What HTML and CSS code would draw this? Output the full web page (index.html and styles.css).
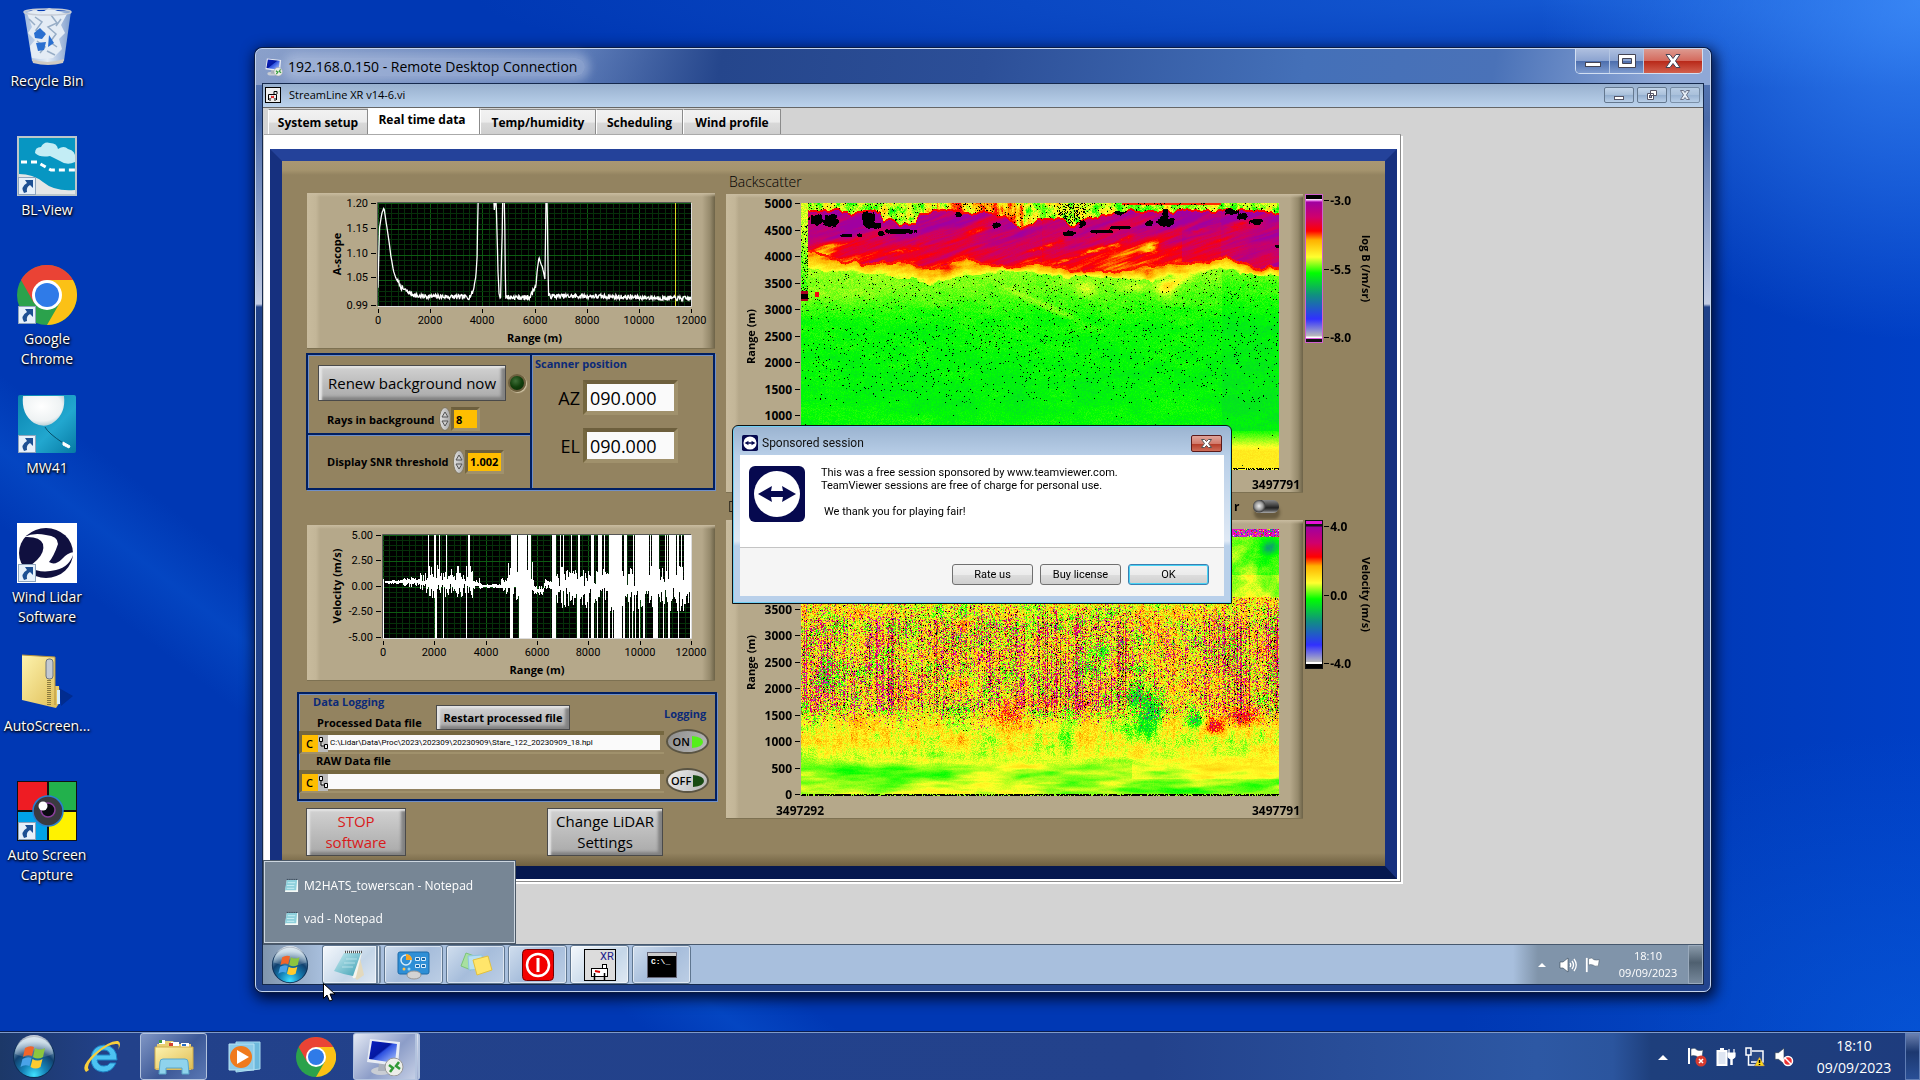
FILE: index.html
```html
<!DOCTYPE html>
<html lang="en">
<head>
    <meta charset="UTF-8">
    <meta name="viewport" content="width=device-width, initial-scale=1.0">
    <title>Remote Desktop - StreamLine XR</title>
    <link rel="stylesheet" href="styles.css">
</head>
<body>
    <!-- shared icons -->
    <svg class="defs" width="0" height="0" aria-hidden="true">
        <defs>
            <radialGradient id="orbFill" cx="50%" cy="95%" r="85%">
                <stop offset="0" stop-color="#3fe0ff"/><stop offset=".35" stop-color="#1583b8"/><stop offset=".7" stop-color="#11406e"/><stop offset="1" stop-color="#8fb3cc"/>
            </radialGradient>
            <linearGradient id="shine" x1="0" y1="0" x2="0" y2="1">
                <stop offset="0" stop-color="#fff" stop-opacity=".75"/><stop offset="1" stop-color="#fff" stop-opacity=".1"/>
            </linearGradient>
            <linearGradient id="screenFill" x1="0" y1="0" x2="1" y2="1">
                <stop offset="0" stop-color="#0a1fc0"/><stop offset=".45" stop-color="#0418a0"/><stop offset=".5" stop-color="#2c50e0"/><stop offset="1" stop-color="#b8d0ff"/>
            </linearGradient>
            <linearGradient id="folderFill" x1="0" y1="0" x2="1" y2="1">
                <stop offset="0" stop-color="#fdf3ae"/><stop offset="1" stop-color="#dfbd55"/>
            </linearGradient>
            <linearGradient id="padFill" x1="0" y1="0" x2="1" y2="1">
                <stop offset="0" stop-color="#c9ecf2"/><stop offset="1" stop-color="#3b9fb3"/>
            </linearGradient>
            <linearGradient id="tealFill" x1="0" y1="0" x2="1" y2="1">
                <stop offset="0" stop-color="#0a84b0"/><stop offset=".6" stop-color="#22a7cf"/><stop offset="1" stop-color="#067aa3"/>
            </linearGradient>
            <radialGradient id="balloonFill" cx="45%" cy="35%" r="70%">
                <stop offset="0" stop-color="#fff"/><stop offset=".7" stop-color="#eef2f3"/><stop offset="1" stop-color="#a9c6cf"/>
            </radialGradient>
            <linearGradient id="binFill" x1="0" y1="0" x2="1" y2="0">
                <stop offset="0" stop-color="#9fb9dd"/><stop offset=".5" stop-color="#e3ecf6"/><stop offset="1" stop-color="#7d9ccc"/>
            </linearGradient>
        </defs>
        <symbol id="orb" viewBox="0 0 44 44">
            <circle cx="22" cy="22" r="21" fill="#0c2f55"/>
            <circle cx="22" cy="22" r="20" fill="url(#orbFill)"/>
            <path d="M3 19a19 19 0 0 1 38 0q-18 8-38 0z" fill="url(#shine)"/>
            <path d="M13 13q5-3 9-1l-2 9q-5-2-9 1z" fill="#f0652a"/>
            <path d="M23 13q5 3 10 0l-2 9q-5 3-10 0z" fill="#8cc63f"/>
            <path d="M10.500 24q5-3 9-1l-2 8q-5-2-9 1z" fill="#4aa3e8"/>
            <path d="M20.500 24q5 3 10 0l-2 8q-5 3-10 0z" fill="#ffcb2e"/>
        </symbol>
        <symbol id="chrome" viewBox="0 0 60 60">
            <circle cx="30" cy="30" r="30" fill="#2ba24c"/>
            <path d="M4 15A30 30 0 0 1 56 15L30 15L17 38z" fill="#ea4335"/>
            <path d="M30 15H56a30 30 0 0 1-26 45l13-22.500z" fill="#fbc116"/>
            <circle cx="30" cy="30" r="15" fill="#fff"/>
            <circle cx="30" cy="30" r="12" fill="#2f7be8"/>
        </symbol>
        <symbol id="shortcut" viewBox="0 0 18 18">
            <rect x=".5" y=".5" width="17" height="17" fill="#e6f0fa" stroke="#8fa5bd"/>
            <path d="M7 3h8v8l-3-3q-4 2-3 7l-3 1Q2 10 9 6z" fill="#1d4f92"/>
        </symbol>
        <symbol id="notepad" viewBox="0 0 36 32">
            <path d="M27 5l5 21-7 5-3-3z" fill="#e3d9bd"/>
            <path d="M12 3h18l-6 25q-1 2-3 1z" fill="#f5f5ef"/>
            <path d="M12 4h17l-8 23Q10 25 2 22z" fill="url(#padFill)"/>
            <path d="M14 10h11M12 14h11M10 18h11" stroke="#d8f2f6" stroke-opacity=".6"/>
            <path d="M13 3h17" stroke="#555" stroke-width="2.500" stroke-dasharray="1 1"/>
        </symbol>
        <symbol id="notepad-small" viewBox="0 0 16 16">
            <path d="M3 2h12v13H1z" fill="#f4f9f6"/>
            <path d="M3 2h11l-1 11H1z" fill="#8ed0dc"/>
            <path d="M4 5h8M3 8h8M3 11h8" stroke="#c9eef3"/>
            <path d="M3 1.500h12" stroke="#234" stroke-dasharray="1 1"/>
        </symbol>
        <symbol id="rdp" viewBox="0 0 38 38">
            <ellipse cx="15" cy="33" rx="10" ry="4" fill="#c9cdd4"/>
            <path d="M13 25h7v8h-8z" fill="#aab0bb"/>
            <path d="M4 1l30 3-2 24L1 24z" fill="#e8ecf4"/>
            <path d="M6 3l25 3-2 19L3 21z" fill="url(#screenFill)"/>
            <circle cx="28" cy="29" r="9" fill="#eceee9" stroke="#999"/>
            <path d="M23 27l4 3-3 4M33 24l-3 4 4 3" fill="none" stroke="#2f9a35" stroke-width="2.500"/>
        </symbol>
        <symbol id="teamviewer" viewBox="0 0 56 56">
            <rect width="56" height="56" rx="6" fill="#06094f"/>
            <circle cx="28" cy="28" r="23" fill="#fff"/>
            <path d="M9 28l14-8-1 5h12l-1-5 14 8-14 8 1-5H22l1 5z" fill="#06094f"/>
        </symbol>
        <symbol id="vi" viewBox="0 0 16 16">
            <rect x=".5" y=".5" width="15" height="15" fill="#eee" stroke="#000"/>
            <path d="M3.500 13V7.500h8V13M5 11v3M10 11v3M9 7V4.500h3V7" fill="none" stroke="#000"/>
            <path d="M6 9l3 2M9 9l-3 2" stroke="#d00"/>
        </symbol>
        <symbol id="speaker" viewBox="0 0 18 16">
            <path d="M1 5h3l5-4v14l-5-4H1z" fill="#fff" stroke="#345" stroke-width=".6"/>
        </symbol>
        <symbol id="waves" viewBox="0 0 18 16">
            <path d="M11 6q1.500 2 0 4M13 4q3 4 0 8M15 2q4.500 6 0 12" fill="none" stroke="#fff" stroke-width="1.300"/>
        </symbol>
        <symbol id="flag" viewBox="0 0 18 18">
            <path d="M2 1v16" stroke="#fff" stroke-width="2"/>
            <path d="M4 2q4-2 6 1 3 1 6 0l-1 7q-4 1-6-1-3-1-5 0z" fill="#fff" stroke="#345" stroke-width=".5"/>
        </symbol>
    </svg>

    <div class="desktop">
        <nav class="desktop-icons" aria-label="Desktop">
            <a href="#recycle" class="desktop-icon">
                <span class="pic"><svg width="60" height="60" viewBox="0 0 60 60">
                    <path d="M7 4h47l-7 50q-17 6-32 0z" fill="url(#binFill)"/>
                    <path d="M10 6l8-4 6 4 8-5 9 3 9 3-6 11 4 8-6 6 3 10-9 9-13 1-8-1-2-12 5-6-7-7 4-6z" fill="#e4ecf5"/>
                    <path d="M18 10l7 5-6 8 9 3M34 8l6 8-9 4 8 7-6 8 7 5M20 34l8 6-5 6M12 12l6 6M44 12l-5 7M30 44l8 4" fill="none" stroke="#97adc6" stroke-width="1.500"/>
                    <path d="M17 26l6-5 6 6-4 5-7-1zM19 36l10-1-2 8-6 1zM32 28l5 8-6 4z" fill="#2a6fd0"/>
                    <ellipse cx="30.500" cy="5" rx="23.500" ry="3" fill="none" stroke="#c6ccd6" stroke-width="1.500"/>
                    <path d="M15 52q15 6 32 0l-1 4q-15 4-30 0z" fill="#cfcac2"/>
                </svg></span>
                <span class="caption">Recycle Bin</span>
            </a>
            <a href="#bl-view" class="desktop-icon">
                <span class="pic"><svg width="60" height="60" viewBox="0 0 60 60">
                    <rect width="60" height="60" fill="#bcc7cb"/><rect x="2" y="2" width="56" height="56" fill="#0796c2"/>
                    <path d="M18 17q0-6 6-6 3-6 9-4 7 0 8 6 6-4 10 0 8 2 7 9v4q-8 4-15-1-6-3-10-5-10 2-15-3z" fill="#c3edf5"/>
                    <path d="M4 26l16 0 14 8h24" fill="none" stroke="#fff" stroke-width="3" stroke-dasharray="6 4"/>
                    <path d="M2 38q14 0 24 8 12 10 32 8v4H2z" fill="#e4e6e6"/>
                </svg><svg class="link-mark" width="18" height="18"><use href="#shortcut"/></svg></span>
                <span class="caption">BL-View</span>
            </a>
            <a href="#chrome-app" class="desktop-icon">
                <span class="pic"><svg width="60" height="60"><use href="#chrome"/></svg><svg class="link-mark" width="18" height="18"><use href="#shortcut"/></svg></span>
                <span class="caption">Google<br>Chrome</span>
            </a>
            <a href="#mw41" class="desktop-icon">
                <span class="pic"><svg width="60" height="60" viewBox="0 0 60 60">
                    <rect x="1" y="1" width="58" height="58" rx="2" fill="url(#tealFill)"/>
                    <path d="M6 2h41q2 17-10 26-9 7-20 1Q4 20 6 2z" fill="url(#balloonFill)"/>
                    <path d="M28 33q3 6 18 16" fill="none" stroke="#06506b"/>
                    <path d="M46 48l7 4-1 2-6-3z" fill="#fff" stroke="#fff"/>
                </svg><svg class="link-mark" width="18" height="18"><use href="#shortcut"/></svg></span>
                <span class="caption">MW41</span>
            </a>
            <a href="#wind-lidar" class="desktop-icon">
                <span class="pic"><svg width="60" height="60" viewBox="0 0 60 60">
                    <rect width="60" height="60" fill="#fff"/>
                    <ellipse cx="29" cy="30" rx="27" ry="25" fill="#10103f"/>
                    <path d="M7 14q10-5 22-2 12 1 12 9-4 12-9 18 6 4 13-3 5-6 12-7-4 15-18 18-16 4-27-3l8-7q8-8 6-16-3-8-19-7z" fill="#fff"/>
                </svg><svg class="link-mark" width="18" height="18"><use href="#shortcut"/></svg></span>
                <span class="caption">Wind Lidar<br>Software</span>
            </a>
            <a href="#autoscreen-zip" class="desktop-icon">
                <span class="pic"><svg width="60" height="60" viewBox="0 0 60 60">
                    <path d="M42 36l14 8-12 10z" fill="#02206b" opacity=".5"/>
                    <path d="M5 3l33 2v29h4l1 16-4 6L5 48z" fill="url(#folderFill)"/>
                    <path d="M5 3l33 2v48" fill="none" stroke="#b6923c"/>
                    <path d="M32 8v46" stroke="#8a7a3f" stroke-width="4" stroke-dasharray="1 1"/>
                    <rect x="29" y="7" width="7" height="20" rx="3" fill="#c3c9d1" stroke="#6b737f"/>
                    <rect x="40" y="38" width="3" height="14" fill="#d8eef8"/>
                </svg></span>
                <span class="caption">AutoScreen...</span>
            </a>
            <a href="#auto-capture" class="desktop-icon">
                <span class="pic"><svg width="60" height="60" viewBox="0 0 60 60">
                    <rect width="60" height="60" fill="#111"/>
                    <rect x="1" y="1" width="29" height="28" fill="#ee1c23"/><rect x="32" y="1" width="27" height="28" fill="#22b14c"/>
                    <rect x="1" y="31" width="29" height="28" fill="#00a2e8"/><rect x="32" y="31" width="27" height="28" fill="#fff200"/>
                    <circle cx="31" cy="30" r="15" fill="#3a3a40" stroke="#2a7fd0" stroke-width="1.500"/>
                    <circle cx="31" cy="29" r="7" fill="#0a0a12" stroke="#8b3f9c" stroke-width="1.500"/>
                    <circle cx="26" cy="25" r="4.500" fill="#fff"/>
                </svg><svg class="link-mark" width="18" height="18"><use href="#shortcut"/></svg></span>
                <span class="caption">Auto Screen<br>Capture</span>
            </a>
        </nav>

        <section class="rdp-window">
            <header class="rdp-title">
                <svg width="18" height="20"><use href="#rdp"/></svg>
                <h1>192.168.0.150 - Remote Desktop Connection</h1>
                <div class="caption-buttons">
                    <button type="button" aria-label="Minimize"><svg width="18" height="16"><rect x="1.500" y="9.500" width="15" height="4" fill="#fff" stroke="#445"/></svg></button>
                    <button type="button" aria-label="Maximize"><svg width="18" height="16"><path d="M.5 1.500h17v13H.5zM4.500 5.500v5h9v-5z" fill="#fff" fill-rule="evenodd" stroke="#445"/></svg></button>
                    <button type="button" class="close" aria-label="Close"><svg width="18" height="16"><path d="M2 1.500h4l3 4 3-4h4l-4.500 6.500 4.500 6.500h-4l-3-4-3 4H2l4.500-6.500z" fill="#fff" stroke="#445"/></svg></button>
                </div>
            </header>

            <div class="remote">
                <div class="vi-title">
                    <svg width="16" height="16"><use href="#vi"/></svg>
                    <span>StreamLine XR v14-6.vi</span>
                    <div class="mdi-buttons">
                        <button type="button" aria-label="Minimize VI"><svg width="14" height="12"><rect x="2.500" y="7.500" width="9" height="3" fill="#fff" stroke="#556"/></svg></button>
                        <button type="button" aria-label="Restore VI"><svg width="14" height="12"><path d="M5.500 1.500h6v5h-6zM2.500 4.500h6v6h-6z" fill="#fff" stroke="#556"/><rect x="4.500" y="6.500" width="2" height="2" fill="#aac" stroke="#556"/></svg></button>
                        <button type="button" class="dim" aria-label="Close VI"><svg width="14" height="12"><path d="M2.500 1.500h3l1.500 2 1.500-2h3l-3 4.500 3 4.500h-3l-1.500-2-1.500 2h-3l3-4.500z" fill="#fff" stroke="#556"/></svg></button>
                    </div>
                </div>

                <main class="vi-body">
                    <div class="tabs" role="tablist">
                        <button type="button" role="tab">System setup</button>
                        <button type="button" role="tab" class="active" aria-selected="true">Real time data</button>
                        <button type="button" role="tab">Temp/humidity</button>
                        <button type="button" role="tab">Scheduling</button>
                        <button type="button" role="tab">Wind profile</button>
                    </div>
                    <div class="tab-page">
                        <div class="front-panel">
                            <div class="left-column">
                                <svg class="graph" id="ascope" width="408" height="156"></svg>

                                <div class="settings">
                                    <div class="background-box">
                                        <div class="row renew">
                                            <button type="button" class="lv-button">Renew background now</button>
                                            <span class="led"></span>
                                        </div>
                                        <div class="row rays">
                                            <label for="rays">Rays in background</label>
                                            <span class="spinner"><svg width="8" height="16"><path d="M4 1l3 5H1zM4 15l3-5H1z"/></svg></span>
                                            <input id="rays" class="amber narrow" type="text" value="8">
                                        </div>
                                    </div>
                                    <div class="snr-box">
                                        <div class="row">
                                            <label for="snr">Display SNR threshold</label>
                                            <span class="spinner"><svg width="8" height="16"><path d="M4 1l3 5H1zM4 15l3-5H1z"/></svg></span>
                                            <input id="snr" class="amber" type="text" value="1.002">
                                        </div>
                                    </div>
                                    <div class="scanner-box">
                                        <h2>Scanner position</h2>
                                        <div class="axis"><label for="az">AZ</label><input id="az" type="text" value="090.000"></div>
                                        <div class="axis"><label for="el">EL</label><input id="el" type="text" value="090.000"></div>
                                    </div>
                                </div>

                                <svg class="graph" id="velocity" width="408" height="156"></svg>

                                <div class="logging">
                                    <div class="logging-files">
                                        <h2>Data Logging</h2>
                                        <div class="logging-head">
                                            <label for="processed">Processed Data file</label>
                                            <button type="button" class="lv-button bold">Restart processed file</button>
                                        </div>
                                        <div class="path">
                                            <span class="drive">C</span><svg width="10" height="17"><path d="M1.500 2.500h3v4h-3zM6.500 9.500h3v4h-3zM3 7v4h3" fill="#eee" stroke="#000"/></svg>
                                            <input id="processed" type="text" value="C:\Lidar\Data\Proc\2023\202309\20230909\Stare_122_20230909_18.hpl">
                                        </div>
                                        <label class="raw-label" for="raw">RAW Data file</label>
                                        <div class="path">
                                            <span class="drive">C</span><svg width="10" height="17"><path d="M1.500 2.500h3v4h-3zM6.500 9.500h3v4h-3zM3 7v4h3" fill="#eee" stroke="#000"/></svg>
                                            <input id="raw" type="text" value="">
                                        </div>
                                    </div>
                                    <div class="logging-switches">
                                        <h2>Logging</h2>
                                        <button type="button" class="oval on">ON<svg width="12" height="14"><path d="M1 1q11 1 11 6t-11 6z" fill="#55ee1c"/></svg></button>
                                        <button type="button" class="oval">OFF<svg width="12" height="14"><path d="M1 1q11 1 11 6t-11 6z" fill="#174a12"/></svg></button>
                                    </div>
                                </div>

                                <div class="bottom-buttons">
                                    <button type="button" class="lv-button stop">STOP<br>software</button>
                                    <button type="button" class="lv-button">Change LiDAR<br>Settings</button>
                                </div>
                            </div>

                            <div class="right-column">
                                <h2 class="plot-name">Backscatter</h2>
                                <div class="map-row">
                                    <div class="map-panel">
                                        <span class="y-title">Range (m)</span>
                                        <ol class="y-axis"></ol>
                                        <canvas id="backscatter-map" width="478" height="267"></canvas>
                                        <div class="x-axis"><span>3497292</span><span>3497791</span></div>
                                    </div>
                                    <div class="color-bar top-bar"></div>
                                    <ol class="color-scale"><li>-3.0</li><li>-5.5</li><li>-8.0</li></ol>
                                    <span class="scale-title">log B (/m/sr)</span>
                                </div>
                                <div class="between">
                                    <span class="light">D</span>
                                    <label for="mode">r</label>
                                    <input id="mode" type="checkbox" class="lever">
                                </div>
                                <div class="map-row">
                                    <div class="map-panel">
                                        <span class="y-title">Range (m)</span>
                                        <ol class="y-axis"></ol>
                                        <canvas id="velocity-map" width="478" height="267"></canvas>
                                        <div class="x-axis"><span>3497292</span><span>3497791</span></div>
                                    </div>
                                    <div class="color-bar low-bar"></div>
                                    <ol class="color-scale"><li>4.0</li><li>0.0</li><li>-4.0</li></ol>
                                    <span class="scale-title">Velocity (m/s)</span>
                                </div>
                            </div>
                        </div>
                    </div>
                </main>

                <footer class="remote-taskbar">
                    <button type="button" class="start" aria-label="Start"><svg width="38" height="38"><use href="#orb"/></svg></button>
                    <button type="button" class="task stacked lit" aria-label="Notepad"><svg width="36" height="32"><use href="#notepad"/></svg></button>
                    <button type="button" class="task" aria-label="Control Panel"><svg width="34" height="30" viewBox="0 0 34 30">
                        <rect x="1" y="2" width="31" height="22" rx="2" fill="#2f8fd6" stroke="#1c6aa8"/>
                        <circle cx="9" cy="10" r="5" fill="none" stroke="#d8ecfa" stroke-width="1.500"/><path d="M9 10V4a6 6 0 0 1 6 6z" fill="#f6a623"/>
                        <path d="M18.500 7.500h4v3h-4zM24.500 7.500h4v3h-4zM18.500 14.500h4v3h-4zM24.500 14.500h4v3h-4z" fill="#1565a8" stroke="#d8ecfa"/>
                        <circle cx="7" cy="19" r="1.500" fill="#ffc04d"/><circle cx="12" cy="19" r="1.500" fill="#8fd6ff"/>
                        <ellipse cx="17" cy="25" rx="7" ry="4" fill="#d3d3d3" stroke="#999"/>
                    </svg></button>
                    <button type="button" class="task" aria-label="Sticky Notes"><svg width="34" height="28" viewBox="0 0 34 28">
                        <path d="M7 2l11 4-6 13-10-4z" fill="#a8e0a0" stroke="#7cc47a"/><path d="M9 5l14-1 1 14-14 1z" fill="#b7dff2" stroke="#8fc4e0"/><path d="M14 9l15-4 4 14-15 5z" fill="#ffe56b" stroke="#e0c040"/>
                    </svg></button>
                    <button type="button" class="task" aria-label="Shutdown"><svg width="32" height="32" viewBox="0 0 32 32">
                        <rect x=".5" y=".5" width="31" height="31" rx="4" fill="#f20000" stroke="#700"/><circle cx="16" cy="16" r="11" fill="none" stroke="#fff" stroke-width="2.500"/><rect x="14.500" y="9" width="3" height="14" fill="#fff"/>
                    </svg></button>
                    <button type="button" class="task lit" aria-label="StreamLine XR"><svg width="32" height="32" viewBox="0 0 32 32">
                        <rect x=".5" y=".5" width="31" height="31" fill="#dcdcdc" stroke="#000"/>
                        <text x="16" y="11" font-size="11" class="icon-text">XR</text>
                        <rect x="7.500" y="19.500" width="16" height="8" fill="#fff" stroke="#000"/><rect x="18.500" y="15.500" width="4" height="4" fill="#fff" stroke="#000"/>
                        <path d="M10.500 24v7M20.500 24v7" stroke="#000" stroke-width="1.500"/><path d="M11 22l5 1" stroke="#d00" stroke-width="2" fill="none"/>
                    </svg></button>
                    <button type="button" class="task" aria-label="Command Prompt"><svg width="30" height="26" viewBox="0 0 30 26">
                        <rect x=".5" y=".5" width="29" height="25" fill="#000" stroke="#667"/><rect x="1" y="1" width="28" height="3" fill="#ccc"/>
                        <text x="4" y="12" font-size="8" class="cmd-text">C:\_</text>
                    </svg></button>
                    <div class="tray">
                        <svg width="10" height="6"><path d="M1 5l4-4 4 4z" fill="#fff"/></svg>
                        <svg width="18" height="16"><use href="#speaker"/><use href="#waves"/></svg>
                        <svg width="16" height="16"><use href="#flag"/></svg>
                    </div>
                    <div class="clock"><time>18:10</time><time>09/09/2023</time></div>
                    <button type="button" class="show-desktop" aria-label="Show desktop"></button>

                    <ul class="window-list">
                        <li><a href="#towerscan"><svg width="15" height="15"><use href="#notepad-small"/></svg>M2HATS_towerscan - Notepad</a></li>
                        <li><a href="#vad"><svg width="15" height="15"><use href="#notepad-small"/></svg>vad - Notepad</a></li>
                    </ul>
                </footer>

                <div class="dialog" role="dialog" aria-labelledby="dialog-title">
                    <div class="dialog-title">
                        <svg width="16" height="16"><use href="#teamviewer"/></svg>
                        <h2 id="dialog-title">Sponsored session</h2>
                        <button type="button" aria-label="Close dialog"><svg width="11" height="9"><path d="M.5.500h3l2 2 2-2h3l-3 4 3 4h-3l-2-2-2 2h-3l3-4z" fill="#fff" stroke="#555"/></svg></button>
                    </div>
                    <div class="dialog-body">
                        <svg width="56" height="56"><use href="#teamviewer"/></svg>
                        <div class="message">
                            <p>This was a free session sponsored by www.teamviewer.com.<br>TeamViewer sessions are free of charge for personal use.</p>
                            <p class="thanks">We thank you for playing fair!</p>
                        </div>
                    </div>
                    <div class="dialog-buttons">
                        <button type="button">Rate us</button>
                        <button type="button">Buy license</button>
                        <button type="button" class="default">OK</button>
                    </div>
                </div>
            </div>
        </section>

        <svg class="cursor" width="13" height="20" viewBox="0 0 13 20"><path d="M.5.500v15l3.500-3.500 2.500 6 3-1-2.500-6h5z" fill="#fff" stroke="#000"/></svg>
    </div>

    <footer class="taskbar">
        <button type="button" class="start" aria-label="Start menu"><svg width="44" height="44"><use href="#orb"/></svg></button>
        <button type="button" class="pin" aria-label="Internet Explorer"><svg width="40" height="36" viewBox="0 0 40 36">
            <path d="M34 21H14q1 6 7 6 4 0 6-3h6q-4 9-13 9Q8 32 8 19 9 7 21 6q13 1 13 15zM14 16h13q-1-5-6-5t-7 5z" fill="#4cc3f2" stroke="#1d82c4"/>
            <path d="M3 33q-6-6 9-19Q27 1 35 2q4 2 0 9 2-6-1-6-8-1-20 10Q2 26 6 31z" fill="#f8ce3c"/>
        </svg></button>
        <button type="button" class="pin open" aria-label="Explorer"><svg width="42" height="38" viewBox="0 0 42 38">
            <path d="M4 6h6l2-3h8l2 3h16v26H3z" fill="#e9cf72"/>
            <path d="M6 2h6v4H6zM18 4h8v4h-8zM28 5h8v4h-8z" fill="#fff"/><path d="M6 2h3v3H6z" fill="#3c9a42"/><path d="M16 5h4v3h-4z" fill="#d3402e"/><path d="M29 6h4v2h-4z" fill="#2c6fc4"/>
            <path d="M2 9h38v22H2z" fill="url(#folderFill)" stroke="#d2ad4a"/>
            <path d="M6 36l1-12q0-3 3-3h22q3 0 3 3l1 12h-7v-6H13v6z" fill="#8fd3ec" stroke="#5ba7c9"/>
        </svg></button>
        <button type="button" class="pin" aria-label="Media Player"><svg width="34" height="32" viewBox="0 0 34 32">
            <path d="M8 1h24v27l-24 3z" fill="#6db9dc" stroke="#a9dcf0"/><path d="M1 3h25v26H1z" fill="#8ccbe8" stroke="#b9e3f4"/>
            <circle cx="13" cy="16" r="11" fill="#f07a1c"/><path d="M9 9l12 7-12 7z" fill="#fff"/>
        </svg></button>
        <button type="button" class="pin" aria-label="Chrome"><svg width="40" height="40"><use href="#chrome"/></svg></button>
        <button type="button" class="pin open bright stacked" aria-label="Remote Desktop"><svg width="38" height="38"><use href="#rdp"/></svg></button>
        <div class="tray">
            <svg width="10" height="6"><path d="M0 6l5-5 5 5z" fill="#fff"/></svg>
            <svg width="20" height="20" viewBox="0 0 20 20"><use href="#flag" width="18" height="18"/><circle cx="14" cy="14" r="5.500" fill="#d63a2f"/><path d="M12 12l4 4M16 12l-4 4" stroke="#fff" stroke-width="1.500"/></svg>
            <svg width="20" height="20" viewBox="0 0 20 20"><path d="M1.500 4h9v14h-9z" fill="#dfe6f2" stroke="#fff" stroke-width="2"/><path d="M4 2h4" stroke="#fff" stroke-width="2"/><path d="M13 2v4M18 2v4M12 6h7v3q0 2-3.500 3Q12 11 12 9z" fill="#fff" stroke="#fff" stroke-width="1.200"/><path d="M15.500 11v7" stroke="#fff" stroke-width="2.500"/></svg>
            <svg width="20" height="20" viewBox="0 0 20 20"><path d="M7 4h11v11H6" fill="#2a4a85" stroke="#fff" stroke-width="1.500"/><path d="M1 1h5v7H1zM3.500 8v10h8" fill="none" stroke="#fff" stroke-width="1.500"/><path d="M14.500 10l5 9h-10z" fill="#ffd91a" stroke="#866" stroke-width=".5"/><path d="M14.500 13v3M14.500 17v1" stroke="#000" stroke-width="1.500"/></svg>
            <svg width="20" height="20" viewBox="0 0 20 20"><use href="#speaker" width="20" height="18"/><circle cx="14" cy="14" r="4.500" fill="#e33" stroke="#fff" stroke-width="1.500"/><path d="M11 11l6 6" stroke="#fff" stroke-width="1.500"/></svg>
        </div>
        <div class="clock"><time>18:10</time><time>09/09/2023</time></div>
        <button type="button" class="show-desktop" aria-label="Show host desktop"></button>
    </footer>

    <script src="charts.js"></script>
</body>
</html>
```
FILE: styles.css
```css
* { box-sizing: border-box; }
body {
    margin: 0;
    height: 100vh;
    display: flex;
    flex-direction: column;
    overflow: hidden;
    font-family: "Open Sans", "Noto Sans", sans-serif;
    font-size: 12px;
    color: #000;
}
button, input { font: inherit; color: inherit; margin: 0; padding: 0; border: 0; border-radius: 0; }
h1, h2, p, ol, ul { margin: 0; padding: 0; list-style: none; font: inherit; }
a { color: inherit; text-decoration: none; }
svg { display: block; flex: none; }
.defs { position: absolute; }

/* desktop */
.desktop {
    flex: 1;
    position: relative;
    background:
        radial-gradient(ellipse 380px 340px at 100% 0, rgba(70, 150, 255, .75), transparent),
        radial-gradient(ellipse 1100px 90px at 82% 0, rgba(40, 120, 240, .5), transparent),
        linear-gradient(218deg, transparent 74%, rgba(10, 90, 215, .4) 77%, transparent 80%),
        radial-gradient(ellipse 460px 300px at 100% 100%, rgba(10, 100, 225, .5), transparent),
        linear-gradient(90deg, transparent 85%, rgba(0, 70, 215, .5)),
        #0038b4;
}
.desktop-icons { width: 94px; padding-top: 7px; display: flex; flex-direction: column; }
.desktop-icon { height: 129px; display: flex; flex-direction: column; align-items: center; color: #fff; }
.pic { position: relative; width: 60px; height: 60px; margin-bottom: 4px; }
.link-mark { position: absolute; left: 1px; bottom: 1px; }
.caption {
    font-size: 14px;
    line-height: 20px;
    text-align: center;
    white-space: nowrap;
    text-shadow: 0 1px 2px #000, 1px 1px 3px #000;
}

/* remote desktop window */
.rdp-window {
    position: absolute;
    left: 255px;
    right: 209px;
    top: 48px;
    bottom: 40px;
    padding: 0 7px 7px;
    display: flex;
    flex-direction: column;
    border: 1px solid #c4d4ee;
    border-radius: 7px;
    background:
        linear-gradient(100deg, rgba(170, 185, 215, .6) 0, rgba(100, 130, 190, .4) 22%, #25468c 32%, #2c4f98 50%, #4470b8 72%, #4a72b8 85%, #8fa8d6 97%) 0 0 / 100% 36px no-repeat,
        linear-gradient(#5c7cb8, #4a6aa8 70px, #c2cce4 255px, #1f4189 258px, #22448e);
    box-shadow: 0 0 0 1px #0a1c44, 2px 4px 14px 3px rgba(0, 0, 20, .8);
}
.rdp-title { height: 35px; display: flex; align-items: center; gap: 5px; padding-left: 2px; }
.rdp-title h1 {
    font-size: 14px;
    padding: 0 8px 0 0;
    border-radius: 12px;
    background: rgba(190, 203, 230, .45);
    box-shadow: 0 0 8px 5px rgba(190, 203, 230, .45);
    line-height: 18px;
}
.caption-buttons {
    display: flex;
    align-self: flex-start;
    margin-left: auto;
    border: 1px solid #d2dff2;
    border-top: 0;
    border-radius: 0 0 5px 5px;
    overflow: hidden;
}
.caption-buttons button {
    width: 34px;
    height: 24px;
    display: flex;
    align-items: center;
    justify-content: center;
    border-right: 1px solid #b5c6e2;
    background: linear-gradient(#aebfdf, #8ba3d0 50%, #4e6fae 52%, #7d9ace);
}
.caption-buttons .close { width: 58px; border: 0; background: linear-gradient(#dd9a90, #d4695c 50%, #b92a1a 52%, #d2604e); }

.remote {
    flex: 1;
    position: relative;
    display: flex;
    flex-direction: column;
    min-height: 0;
    background: #d3d3d3;
    outline: 1px solid #15294d;
}
.vi-title {
    height: 23px;
    display: flex;
    align-items: center;
    gap: 8px;
    padding: 0 3px 2px 2px;
    font-size: 11px;
    background: linear-gradient(#98b0ce, #bbd2ec);
}
.mdi-buttons { display: flex; gap: 3px; margin-left: auto; }
.mdi-buttons button {
    width: 30px;
    height: 16px;
    display: flex;
    align-items: center;
    justify-content: center;
    border: 1px solid #64788f;
    border-radius: 2px;
    background: linear-gradient(#c3d5ea, #a9c0da 50%, #93aece 52%, #b9cfe8);
}
.mdi-buttons .dim { opacity: .7; }

.vi-body { flex: 1; min-height: 0; overflow: hidden; padding: 0 1px; border-top: 1px solid #666; }
.tabs { display: flex; align-items: flex-end; height: 26px; padding-left: 4px; }
.tabs button {
    height: 25px;
    padding: 0 8px;
    border: 1px solid #8b8b8b;
    border-left-color: #fff;
    border-bottom: 0;
    background: linear-gradient(#f2f2f2, #ececec 50%, #d8d8d8 55%, #cfcfcf);
    font-weight: 700;
    font-size: 12px;
    flex: none;
    width: 100px;
}
.tabs button:nth-child(3) { width: 116px; }
.tabs button:nth-child(4) { width: 87px; }
.tabs button:nth-child(5) { width: 98px; }
.tabs .active { width: 112px; height: 26px; padding: 0 12px 4px 8px; border-color: #fff #8b8b8b #fff #fff; background: #fff; }

.tab-page {
    width: fit-content;
    padding: 14px 3px 2px 6px;
    background: #fff;
    border: 1px solid #8b8b8b;
    border-top-color: #aaa;
    border-left: 0;
    box-shadow: 2px 2px 0 #fff;
}
.front-panel {
    display: grid;
    grid-template-columns: 408px 647px;
    column-gap: 11px;
    padding: 32px 12px 10px 25px;
    border: solid;
    border-width: 12px 12px 13px;
    border-color: #24429a #16307f #05184f #16307f;
    background:
        linear-gradient(#a99773, #a5946e 9px, transparent 14px),
        linear-gradient(0deg, #6f6040, transparent 13px),
        #938360;
}
.left-column { display: flex; flex-direction: column; }

/* graphs */
.graph, .map-panel {
    background:
        linear-gradient(#c9bca0, transparent 4px),
        linear-gradient(90deg, #c8bb9d, #c3b698 9px, transparent 13px),
        linear-gradient(270deg, #6d6348, #968a6c 5px, transparent 13px),
        #b5a88a;
    border-bottom: 1px solid #7d7152;
}
.graph text { font-family: Roboto, sans-serif; font-size: 11px; }
.graph .title { font-family: "Open Sans", sans-serif; font-weight: 700; font-size: 11px; }

/* settings boxes */
.settings {
    display: grid;
    grid-template-columns: 226px 183px;
    grid-template-rows: 82px 55px;
    margin: 4px 0 35px -1px;
    font-weight: 700;
    font-size: 11px;
}
.background-box, .snr-box, .scanner-box {
    border: 2px solid #001f63;
    box-shadow: inset 1px 1px 0 #6f8fc8, 1px 1px 0 #6f8fc8;
}
.snr-box { border-top: 0; display: flex; align-items: center; }
.scanner-box { grid-column: 2; grid-row: 1 / 3; border-left: 0; padding: 1px 0 0 3px; }
h2 { color: #0b2a78; }
.scanner-box h2, .logging h2 { font-weight: 700; font-size: 11px; line-height: 16px; }
.row { display: flex; align-items: center; padding-left: 19px; }
.renew { padding: 10px 0 0 10px; gap: 2px; }
.rays { margin-top: 6px; }
.rays label, .snr-box label { width: 112px; white-space: nowrap; }
.snr-box label { width: 126px; }
.lv-button {
    border: 1px solid #4a4a4a;
    background: linear-gradient(#d2d2d2, #bdbdbd 50%, #a9a9a9);
    box-shadow: inset 3px 2px 2px #e4e4e4, inset -4px -3px 3px #828282;
    font-size: 15px;
    font-weight: 400;
    line-height: 21px;
}
.renew .lv-button { width: 188px; height: 36px; }
.led {
    width: 18px;
    height: 18px;
    border-radius: 50%;
    background: radial-gradient(circle at 40% 35%, #3f6f38, #123f0c 50%, #0a2606);
    border: 2px solid #6d603f;
    box-shadow: 1px 1px 1px #d0c3a4;
}
.spinner {
    display: flex;
    align-items: center;
    justify-content: center;
    width: 12px;
    height: 24px;
    border-radius: 50%;
    background: linear-gradient(90deg, #e0e0e0, #a8a8a8);
    border: 1px solid #857b62;
}
.spinner path { fill: #ccc; stroke: #555; }
.amber {
    width: 39px;
    height: 24px;
    padding-left: 2px;
    border: 3px solid;
    border-color: #6d5f3d #a0916c #a0916c #75673f;
    background: #ffbe00;
    font-weight: 700;
}
.amber.narrow { width: 29px; }
.scanner-box .axis { display: flex; align-items: center; justify-content: flex-end; gap: 3px; margin: 8px 35px 13px 0; font-size: 18px; font-weight: 400; }
.scanner-box input {
    width: 95px;
    height: 35px;
    padding-left: 3px;
    border: 4px solid;
    border-color: #6d5f3d #a0916c #a0916c #75673f;
    background: #fafafa;
}

/* data logging */
.logging {
    display: grid;
    grid-template-columns: 365px 1fr;
    height: 109px;
    margin: 11px -2px 7px -10px;
    border: 2px solid #001f63;
    box-shadow: inset 1px 1px 0 #6f8fc8, 1px 1px 0 #6f8fc8;
    font-weight: 700;
    font-size: 11px;
}
.logging-files h2 { height: 11px; padding-left: 14px; }
.logging-head { display: flex; justify-content: space-between; height: 26px; padding: 0 94px 1px 18px; }
.logging-head label { align-self: flex-end; }
.lv-button.bold { width: 134px; height: 25px; font-size: 11px; font-weight: 700; }
.path {
    display: flex;
    height: 23px;
    align-items: flex-start;
    border: solid;
    border-width: 4px 0 2px 3px;
    border-color: #75673f transparent #a0916c #75673f;
}
.drive { width: 16px; height: 17px; line-height: 17px; padding-left: 4px; background: #ffbe00; font-weight: 600; }
.path svg { background: #bbb; }
.path input { flex: 1; height: 15px; margin-right: 4px; padding-left: 2px; background: #fafafa; font-family: Roboto, sans-serif; font-size: 8px; font-weight: 400; }
.raw-label { display: block; height: 16px; line-height: 14px; padding-left: 17px; }
.logging-switches { display: flex; flex-direction: column; align-items: center; padding-right: 4px; }
.logging-switches h2 { margin: 12px 5px 7px 0; }
.oval {
    display: flex;
    align-items: center;
    justify-content: center;
    gap: 1px;
    width: 43px;
    height: 25px;
    border: 2px solid #5a5443;
    border-radius: 50%;
    background: linear-gradient(120deg, #eee, #b5b5b5);
    font-size: 11px;
    font-weight: 600;
    margin-bottom: 14px;
}
.oval.on { background: linear-gradient(120deg, #8d8d8d, #b9b9b9); }
.bottom-buttons { display: flex; justify-content: space-between; align-items: flex-start; margin: 0 52px 0 -1px; }
.bottom-buttons .lv-button { width: 116px; height: 48px; }
.bottom-buttons .stop { width: 100px; color: #d81b1b; }

/* heat maps */
.right-column { margin-top: -22px; }
.plot-name { height: 23px; padding-left: 3px; font-size: 14px; font-weight: 300; line-height: 22px; color: #000; }
.map-row { display: flex; align-items: flex-start; font-weight: 700; font-size: 12px; line-height: 14px; }
.map-panel {
    display: grid;
    grid-template-columns: 20px 37px 478px;
    grid-template-rows: 267px auto;
    width: 577px;
    height: 299px;
    padding: 9px 0 0 18px;
    flex: none;
}
.y-title, .scale-title { writing-mode: vertical-rl; font-size: 11px; text-align: center; white-space: nowrap; }
.y-title { transform: rotate(180deg); }
.y-axis { display: flex; flex-direction: column; justify-content: space-between; margin: -6px 0; text-align: right; white-space: nowrap; }
.y-axis li::after { content: ""; display: inline-block; width: 5px; height: 1px; margin: 0 1px 0 3px; vertical-align: 4px; background: #000; }
.x-axis { grid-column: 1 / 4; display: flex; justify-content: space-between; padding-top: 8px; margin: 0 -21px 0 32px; }
.color-bar { width: 20px; height: 149px; margin: 0 0 0 2px; border: 1px solid #d060d0; }
.top-bar { background: linear-gradient(#000 4px, #fff 4px, #e060e0 6px, #a000a0 7px, #d0006c 22px, #ff0000 36px, #ffb000 45px, #ffff30 62px, #00ff00 78px, #109080 100px, #3030ff 124px, #bbb 141px, #fff 142px, #fff 143px, #e060e0 143px, #e060e0 144px, #111 144px); }
.low-bar { border-color: #111; background: linear-gradient(#e612d9 3px, #111 3px, #111 5px, #a000a0 6px, #d0006c 22px, #ff0000 36px, #ffb000 45px, #ffff30 62px, #00ff00 78px, #109080 100px, #3030ff 124px, #bbb 141px, #fff 141px, #fff 143px, #000 143px); }
.color-scale { height: 151px; width: 40px; display: flex; flex-direction: column; justify-content: space-between; white-space: nowrap; }
.color-scale li::before { content: ""; display: inline-block; width: 5px; height: 1px; margin: 0 1px; vertical-align: 4px; background: #000; }
.scale-title { height: 149px; }
.between { display: flex; align-items: center; height: 27px; font-weight: 700; font-size: 12px; }
.light { font-weight: 300; font-size: 14px; width: 508px; padding-left: 2px; }
.lever {
    appearance: none;
    width: 26px;
    height: 13px;
    margin-left: 14px;
    border-radius: 6px;
    background: radial-gradient(circle at 6px 6px, #eee, #999 4px, #444 6px, transparent 7px), linear-gradient(#888, #222 60%, #555 80%, #aaa);
    box-shadow: 1px 6px 3px rgba(60, 50, 30, .5);
}

/* task bars */
.remote-taskbar {
    position: relative;
    height: 40px;
    display: flex;
    align-items: stretch;
    color: #fff;
    border-top: 1px solid #47586d;
    background: linear-gradient(90deg, #8095ac, #a8bfdd 60px, #a8bfdd calc(100% - 190px), #8094aa calc(100% - 165px), #8094aa);
}
.start { width: 54px; background: none; display: flex; align-items: center; justify-content: center; }
.remote-taskbar .start { margin-right: 5px; }
.task {
    width: 59px;
    margin-right: 3px;
    display: flex;
    align-items: center;
    justify-content: center;
    border: 1px solid #5f7690;
    border-radius: 3px;
    box-shadow: inset 0 0 0 1px rgba(255, 255, 255, .55);
    background: linear-gradient(135deg, #d0deee, #a6bddb 50%, #bccee5);
}
.lit { background: linear-gradient(135deg, #f4f8fc, #c4d6e8 60%, #dfe8f2); }
.task.stacked { border-right: 5px double #74899f; }
.tray { display: flex; align-items: center; margin-left: auto; }
.remote-taskbar .tray { gap: 8px; margin-right: 15px; }
.remote-taskbar .tray svg:first-child { margin-right: 4px; }
.clock { display: flex; flex-direction: column; align-items: center; justify-content: center; font-size: 11px; line-height: 17px; }
.remote-taskbar .clock { width: 64px; margin-right: 8px; padding-bottom: 1px; }
.show-desktop { width: 15px; border: 1px solid #9aaabc; background: linear-gradient(#8999a9, #4f6070 45%, #76889b); }
.icon-text { font-family: Roboto, sans-serif; fill: #1a1a8c; }
.cmd-text { font-family: "Liberation Mono", monospace; font-weight: 700; fill: #fff; }

.window-list {
    position: absolute;
    left: 0;
    bottom: 40px;
    width: 253px;
    height: 84px;
    padding: 8px 20px;
    border: 1px solid #e8eef4;
    outline: 1px solid #4c5967;
    outline-offset: -1px;
    box-shadow: inset 0 0 0 1px #ccd6e0;
    background: #778695;
    font-size: 12px;
}
.window-list li { height: 33px; }
.window-list a { display: flex; align-items: center; gap: 5px; height: 33px; white-space: nowrap; }

.taskbar {
    height: 48px;
    display: flex;
    align-items: center;
    color: #fff;
    border-top: 1px solid #7f9ac9;
    box-shadow: 0 -1px 0 #0a1d4e;
    background: linear-gradient(90deg, #1c3868, #22418a 110px, #23428c 60%, #2d58a4 80%, #2b559e 84%, #1e3f7c 86%, #1e3c7e);
    position: relative;
}
.taskbar .start { width: 67px; }
.pin { width: 67px; height: 47px; margin: 0 2px; display: flex; align-items: center; justify-content: center; background: none; }
.taskbar .pin.open {
    border: 1px solid #b3c3de;
    border-radius: 3px;
    background: linear-gradient(135deg, #8096c4, #3c5897 55%, #5a78b4);
}
.taskbar .pin.bright { background: linear-gradient(135deg, #e4e9f4, #8c9dc8 55%, #c5cfe5); }
.taskbar .pin.stacked { border-right: 5px double #b3c3de; }
.taskbar .tray { gap: 9px; margin-right: 19px; }
.taskbar .tray svg:first-child { margin-right: 10px; }
.taskbar .clock { width: 82px; margin-right: 10px; font-size: 14px; line-height: 22px; }
.taskbar .show-desktop { height: 47px; border-color: #5f7db5; background: linear-gradient(#6a7fae, #1c3870 40%, #2a4f96); }

.cursor { position: absolute; left: 323px; top: 983px; }

/* dialog */
.dialog {
    position: absolute;
    left: 469px;
    top: 341px;
    width: 500px;
    padding: 0 7px 7px;
    border: 1px solid #111;
    border-radius: 6px 6px 0 0;
    box-shadow: inset 0 0 0 1px #6fd0f5;
    background: linear-gradient(#9ab3d0, #b9cfe8 30px, #dfe9f5 115px, #b9d0ea 120px);
    font-family: Roboto, sans-serif;
    font-size: 11px;
    line-height: 13px;
}
.dialog-title { display: flex; align-items: center; gap: 4px; height: 29px; padding: 5px 2px 0; }
.dialog-title h2 { color: #111; font-size: 12px; }
.dialog-title button {
    display: flex;
    align-items: center;
    justify-content: center;
    width: 31px;
    height: 17px;
    margin-left: auto;
    border: 1px solid #5b1a1a;
    border-radius: 2px;
    background: linear-gradient(#e0a59b, #d27b6c 50%, #b23a26 52%, #cf6d59);
}
.dialog-body { display: flex; gap: 16px; height: 93px; padding: 11px 9px; background: #fff; border-bottom: 1px solid #c4c4c4; }
.thanks { margin: 13px 0 0 3px; }
.dialog-buttons { display: flex; justify-content: flex-end; gap: 7px; height: 48px; padding: 16px 15px 0; background: #f5f5f5; }
.dialog-buttons button {
    width: 81px;
    height: 21px;
    border: 1px solid #707070;
    border-radius: 3px;
    background: linear-gradient(#f2f2f2, #ebebeb 50%, #dddddd 52%, #cfcfcf);
}
.dialog-buttons .default { border-color: #3c7fb1; box-shadow: inset 0 0 0 1px #48d3f5; }
```
FILE: charts.js
```js
// small repeatable random generator
function rng(seed) {
    return function () {
        seed = (seed * 1664525 + 1013904223) >>> 0;
        return seed / 4294967296;
    };
}

// ---- line graphs ----
const TOP = 10, BOTTOM = 113;

function text(x, y, anchor, str, extra) {
    return `<text x="${x}" y="${y}" text-anchor="${anchor}" ${extra || ''}>${str}</text>`;
}

function frame(left, right, yTicks, title) {
    let s = `<rect x="${left}" y="${TOP}" width="${right - left}" height="${BOTTOM - TOP}" fill="#000"/>`;
    for (let i = 0; i <= 48; i++) {
        const x = Math.round(left + (right - left) * i / 48) + 0.5;
        s += `<path d="M${x} ${TOP}V${BOTTOM}" stroke="${i % 8 ? '#06300a' : '#0d5a12'}"/>`;
    }
    for (let i = 0; i <= 20; i++) {
        const y = Math.round(TOP + (BOTTOM - TOP) * i / 20) + 0.5;
        s += `<path d="M${left} ${y}H${right}" stroke="${i % 5 ? '#06300a' : '#0d5a12'}"/>`;
    }
    yTicks.forEach(([label, y]) => {
        s += text(left - 10, y + 4, 'end', label) + `<path d="M${left - 7} ${y + 0.5}h5" stroke="#000"/>`;
    });
    for (let i = 0; i <= 6; i++) {
        const x = Math.round(left + (right - left) * i / 6);
        s += `<path d="M${x + 0.5} ${BOTTOM + 3}v4" stroke="#000"/>` + text(x, BOTTOM + 18, 'middle', i * 2000);
    }
    s += text((left + right) / 2, BOTTOM + 36, 'middle', 'Range (m)', 'class="title"');
    s += text(0, 0, 'middle', title, 'class="title" transform="translate(34 61) rotate(-90)"');
    return s;
}

function finish(left, right) {
    return `<path d="M${left - 0.5} ${BOTTOM}V${TOP - 0.5}H${right}" fill="none" stroke="#555"/>` +
        `<path d="M${left} ${BOTTOM + 0.5}H${right + 0.5}V${TOP}" fill="none" stroke="#ddd"/>`;
}

function drawAscope() {
    const left = 71, right = 384, rnd = rng(7);
    const pts = [[0, 1.03], [60, 1.15], [150, 1.18], [230, 1.19], [300, 1.165], [400, 1.13], [500, 1.09], [600, 1.06],
        [700, 1.045], [900, 1.027], [1200, 1.017], [1500, 1.01], [3500, 1.008], [3650, 1.02], [3750, 1.05], [3800, 1.09],
        [3850, 1.25], [4420, 1.25], [4470, 1.17], [4500, 1.25], [4550, 1.17], [4600, 1.06], [4650, 1.01], [4700, 1.008],
        [4760, 1.14], [4780, 1.25], [4840, 1.25], [4890, 1.008], [5700, 1.007], [5850, 1.01], [5950, 1.022], [6050, 1.03],
        [6100, 1.06], [6170, 1.09], [6250, 1.075], [6300, 1.07], [6400, 1.045], [6450, 1.25], [6480, 1.25], [6530, 1.01],
        [8000, 1.01], [12000, 1.005]];
    let d = '', k = 0;
    for (let r = 0; r <= 12000; r += 20) {
        while (k < pts.length - 2 && pts[k + 1][0] < r) k++;
        const [a, b] = [pts[k], pts[k + 1]];
        let v = a[1] + (b[1] - a[1]) * (r - a[0]) / (b[0] - a[0]);
        if (v < 1.04) v += (rnd() - 0.5) * 0.01;
        const y = Math.max(TOP - 4, BOTTOM - (v - 0.99) / 0.21 * (BOTTOM - TOP));
        d += (d ? 'L' : 'M') + (left + (right - left) * r / 12000).toFixed(1) + ' ' + y.toFixed(1);
    }
    const ticks = [['1.20', 10], ['1.15', 35], ['1.10', 60], ['1.05', 84], ['0.99', 112]];
    document.getElementById('ascope').innerHTML = frame(left, right, ticks, 'A-scope') +
        `<clipPath id="ascope-clip"><rect x="${left}" y="${TOP}" width="${right - left}" height="${BOTTOM - TOP}"/></clipPath>` +
        `<path d="M368.500 ${TOP}V${BOTTOM}" stroke="#d8d820"/>` +
        `<path d="${d}" clip-path="url(#ascope-clip)" fill="none" stroke="#fff" stroke-width="1.300"/>` + finish(left, right);
}

function drawVelocity() {
    const left = 76, right = 384, mid = 62, rnd = rng(21);
    // [x, width] of the folded returns, above and below zero
    const up = [[45, 1], [51, 2], [56, 1], [63, 1], [85, 2], [128, 6], [135, 9], [145, 3], [169, 4], [177, 1], [180, 1], [188, 1],
        [195, 2], [208, 3], [215, 4], [221, 1], [226, 13], [241, 3], [250, 1], [252, 14], [267, 1], [269, 7], [282, 1], [284, 1],
        [286, 7], [294, 2], [298, 1], [301, 7]];
    const down = [[0, 1], [52, 2], [60, 1], [83, 1], [127, 3], [136, 7], [143, 6], [169, 4], [194, 3], [205, 1], [208, 3], [214, 1],
        [220, 1], [225, 2], [229, 1], [231, 8], [240, 2], [246, 1], [249, 1], [252, 1], [256, 1], [260, 2], [270, 5], [280, 1],
        [285, 2], [295, 1], [307, 1]];
    let bars = '';
    up.forEach(([x, w]) => { bars += `<rect x="${left + x}" y="${TOP}" width="${w}" height="${mid - TOP}"/>`; });
    down.forEach(([x, w]) => { bars += `<rect x="${left + x}" y="${mid - 8}" width="${w}" height="${BOTTOM - mid + 8}"/>`; });
    // spread of the returns round the mean, one column per pixel
    for (let x = 2; x < 308; x++) {
        let a = 1, base = -5;
        if (x > 18) a = 4;
        if (x > 36) a = 9;
        if (x > 42) a = 16;
        if (x > 89) { a = 5; base = -3; }
        if (x > 97) { a = 1; base = -1; }
        if (x > 116) a = 8;
        if (x > 124) { a = 18; base = -6; }
        if (x > 150) { a = 4; base = 3; }
        if (x > 160) { a = 4; base = -3; }
        if (x > 168) { a = 20; base = 0; }
        if (x > 225) { a = 24; base = 0; }
        const top = 1 + a * rnd(), low = 1 + a * rnd();
        bars += `<rect x="${left + x}" y="${(mid + base - top).toFixed(1)}" width="1" height="${(top + low).toFixed(1)}"/>`;
    }
    const ticks = [['5.00', 10], ['2.50', 35], ['0.00', 61], ['-2.50', 86], ['-5.00', 112]];
    document.getElementById('velocity').innerHTML = frame(left, right, ticks, 'Velocity (m/s)') +
        `<g fill="#fff" shape-rendering="crispEdges">${bars}</g>` + finish(left, right);
}

// ---- heat maps ----
const STOPS = [[0, 255, 255, 255], [0.03, 190, 190, 190], [0.14, 48, 48, 255], [0.32, 16, 144, 128], [0.48, 0, 255, 0],
    [0.6, 255, 255, 40], [0.7, 255, 176, 0], [0.78, 255, 0, 0], [0.9, 205, 0, 100], [1, 160, 0, 160]];

function color(t) {
    t = Math.min(1, Math.max(0, t));
    let i = 0;
    while (i < STOPS.length - 2 && STOPS[i + 1][0] < t) i++;
    const a = STOPS[i], b = STOPS[i + 1], f = (t - a[0]) / (b[0] - a[0]);
    return [1, 2, 3].map(c => a[c] + (b[c] - a[c]) * f);
}

// smooth value noise, -1..1
function makeNoise(seed) {
    const rnd = rng(seed), grid = Array.from({ length: 4096 }, () => rnd() * 2 - 1);
    const at = (x, y) => grid[((x & 63) + (y & 63) * 64)];
    const one = (x, y) => {
        const xi = Math.floor(x), yi = Math.floor(y);
        let fx = x - xi, fy = y - yi;
        fx = fx * fx * (3 - 2 * fx);
        fy = fy * fy * (3 - 2 * fy);
        const p = at(xi, yi) + (at(xi + 1, yi) - at(xi, yi)) * fx;
        const q = at(xi, yi + 1) + (at(xi + 1, yi + 1) - at(xi, yi + 1)) * fx;
        return p + (q - p) * fy;
    };
    return (x, y) => (one(x, y) + one(x * 2.1 + 9, y * 2.1 + 5) * 0.5 + one(x * 4.3 + 3, y * 4.3 + 8) * 0.25) / 1.3;
}

function paint(id, pixel) {
    const canvas = document.getElementById(id), ctx = canvas.getContext('2d');
    const img = ctx.createImageData(canvas.width, canvas.height);
    for (let y = 0; y < canvas.height; y++) {
        for (let x = 0; x < canvas.width; x++) {
            const c = pixel(x, y), i = (y * canvas.width + x) * 4;
            img.data[i] = c[0];
            img.data[i + 1] = c[1];
            img.data[i + 2] = c[2];
            img.data[i + 3] = 255;
        }
    }
    ctx.putImageData(img, 0, 0);
}

const BLACK = [0, 0, 0];

function blob(x, y, cx, cy, rx, ry) {
    const d = ((x - cx) / rx) ** 2 + ((y - cy) / ry) ** 2;
    return Math.exp(-d);
}

// height of a polyline at x
function along(line, x) {
    let i = 0;
    while (i < line.length - 2 && line[i + 1][0] < x) i++;
    const [a, b] = [line[i], line[i + 1]];
    return a[1] + (b[1] - a[1]) * (x - a[0]) / (b[0] - a[0]);
}

function drawBackscatter() {
    const n = makeNoise(3), m = makeNoise(11), rnd = rng(5);
    const cloudTop = [[0, 7], [46, 7], [50, 12], [58, 8], [78, 7], [82, 18], [90, 12], [100, 20], [114, 20], [118, 8], [150, 6],
        [180, 9], [205, 14], [218, 22], [240, 16], [262, 14], [270, 22], [278, 18], [300, 10], [320, 7], [360, 7], [420, 6], [478, 9]];
    const cloudBase = [[0, 46], [20, 52], [40, 60], [110, 62], [130, 66], [165, 55], [190, 66], [235, 62], [275, 70], [330, 69],
        [350, 62], [400, 62], [425, 56], [460, 67], [478, 66]];
    const fringe = [[0, 65], [60, 70], [110, 75], [130, 80], [165, 73], [200, 68], [275, 74], [330, 74], [345, 78], [360, 74], [378, 74], [420, 66], [478, 74]];
    const dark = [[15, 16, 8, 6], [29, 17, 8, 8], [67, 16, 8, 9], [74, 22, 6, 4], [98, 28, 18, 3], [45, 32, 7, 2], [58, 32, 3, 2],
        [80, 30, 4, 3], [268, 30, 7, 3], [281, 20, 4, 5], [300, 28, 14, 2], [318, 8, 8, 4], [364, 18, 9, 6], [364, 10, 3, 8],
        [348, 20, 4, 4], [430, 8, 9, 4], [440, 13, 6, 4], [455, 18, 9, 3], [320, 24, 12, 2], [195, 22, 5, 3], [476, 43, 3, 2], [157, 11, 4, 3]];
    const wisps = [[105, 46, 20, 4, 0.14], [18, 56, 18, 7, 0.12], [25, 42, 12, 3, 0.08], [350, 45, 9, 5, 0.17], [325, 34, 8, 3, 0.13],
        [312, 42, 10, 3, 0.13], [290, 48, 14, 3, 0.15], [235, 46, 14, 3, 0.13], [255, 40, 14, 3, 0.11], [260, 58, 14, 2, 0.12],
        [435, 22, 14, 4, 0.12], [395, 27, 20, 3, 0.09], [175, 27, 12, 2, 0.08], [145, 66, 10, 5, -0.12], [345, 72, 5, 5, -0.14]];
    paint('backscatter-map', (x, y) => {
        const fine = (rnd() - 0.5) * 0.04;
        if (x < 7) {
            if (y > 87 && y < 98) return y > 90 && y < 96 ? BLACK : [170, 0, 30];
            if (y < 90) return y > 20 && rnd() < 0.12 ? BLACK : color(0.59 - y * 0.0009 + fine * 2);
        }
        if (x > 13 && x < 18 && y > 88 && y < 94) return color(0.8);
        const edge = along(cloudTop, x) + n(x / 7, 1) * 3;
        const base = along(cloudBase, x) + n(x / 9, 9) * 3;
        const end = along(fringe, x) + n(x / 8, 22) * 3;
        if (y < edge) {
            if (rnd() < (x > 255 && x < 285 ? 0.3 : 0.06)) return BLACK;
            let t = 0.57 + m(x / 6, y / 8) * 0.11 + fine * 2;
            if (x > 135 && x < 225) t += 0.1 + m(x / 4, 3) * 0.12;
            if (y < 2 && x > 320 && x < 420) t = 0.76;
            return color(t);
        }
        if (y < base) {
            for (const [cx, cy, rx, ry] of dark) {
                if (blob(x, y, cx, cy, rx, ry) + m(x / 2.5, y / 3) * 0.25 > 0.5) return BLACK;
            }
            const depth = (y - edge) / (base - edge);
            let t = 0.985 - depth * 0.19 + n((x + y * 1.6) / 24, (y + x * 0.3) / 9) * 0.1 + m((x + y * 2) / 9, (y + x * 0.25) / 3) * 0.05;
            if (x > 240 && x < 420) t -= 0.03;
            if (x > 380) t += depth * 0.08;
            wisps.forEach(w => { t -= blob(x, y + (x - w[0]) * 0.25, w[0], w[1], w[2], w[3]) * w[4] * (1 + m(x / 4, y / 2) * 0.5); });
            if (y - edge < 2) t = 0.78;
            if (base - y < 2.500) t = 0.77;
            return color(t + fine * 0.5);
        }
        if (y < end) {
            const f = (y - base) / (end - base);
            let t = 0.715 - f * 0.13 + m((x + y) / 9, y / 4) * 0.04 + fine * 0.6;
            wisps.slice(-2).forEach(w => { t -= blob(x, y, w[0], w[1], w[2], w[3]) * w[4] * 0.6; });
            return color(t);
        }
        const density = y < 110 ? 0.03 : y < 200 ? 0.04 * (1 - Math.abs(y - 145) / 80) : 0.001;
        if (rnd() < density) return rnd() < 0.7 ? BLACK : [0, 70, 20];
        if (y < 228) {
            let t = 0.545 - Math.min(0.065, (y - 70) * 0.0013) + m(x / 24, y / 9) * 0.015 + fine;
            t += blob(x, y, 365, 85, 9, 10) * 0.08 + blob(x, y - (380 - x) * 0.5, 376, 76, 16, 5) * 0.06 + blob(x, y, 285, 85, 10, 8) * 0.05;
            t += blob(x, y, 335, 84, 14, 5) * 0.05 + blob(x, y - (x - 245) * 0.45, 245, 103, 40, 4) * 0.045 + blob(x, y, 60, 92, 90, 12) * 0.02;
            if (x > 420) t -= 0.02;
            t -= blob(x, y, 240, 190, 300, 35) * 0.016;
            return color(Math.max(t, 0.44));
        }
        if (y > 264) return rnd() < 0.5 ? BLACK : color(0.6);
        return color(Math.min(0.625, 0.49 + (y - 228) * 0.007) + fine * 0.5);
    });
}

function drawVelocityMap() {
    const n = makeNoise(17), m = makeNoise(29), rnd = rng(90);
    const magenta = [225, 18, 200];
    const streak = Array.from({ length: 478 }, () => Math.pow(rnd(), 1.8));
    const hue = Array.from({ length: 478 }, () => rnd());
    paint('velocity-map', (x, y) => {
        const fine = rnd() - 0.5;
        if (y > 264) return rnd() < 0.75 ? BLACK : color(0.55);
        if (y < 8) return rnd() < 0.6 ? magenta : color(rnd());
        if (y < 68) {
            const t = 0.53 + n(x / 16, y / 14) * 0.06 + (y > 45 ? 0.04 : 0) - blob(x, y, 468, 18, 8, 8) * 0.14;
            return color(t + fine * 0.03);
        }
        let t = 0.61 + n(x / 26, y / 14) * 0.07 + m(x / 3, y / 16) * 0.05;
        let active = 0;
        if (y < 205) {
            active = Math.min(1, (y - 66) / 34) * Math.min(1, (205 - y) / 30);
            active *= 0.75 + m(x / 14, y / 40) * 0.45;
            if (x < 105 && y < 88) active = 0.6 * rnd();
            if (x > 120 && x < 175 && y > 76 && y < 90) active = 0.4;
            if (x > 330 && x < 400) active *= 0.6;
            if (x > 425) active += 0.25;
            active *= Math.min(1, (205 - y) / 25);
        }
        if (rnd() < active * (0.2 + streak[x] * 0.8)) {
            const k = rnd() * 0.6 + hue[x] * 0.4;
            if (k < 0.3) return magenta;
            if (k < 0.52) return [215, 0, 95];
            if (k < 0.62) return [235, 30, 20];
            if (k < 0.68) return BLACK;
            if (k < 0.74) return [110, 60, 130];
            if (k < 0.84) return [70, 200, 20];
            return color(0.72);
        }
        t -= blob(x, y, 348, 184, 13, 20) * 0.22 * (0.5 + rnd() * 0.8) + blob(x, y, 392, 193, 9, 7) * 0.24 * (0.5 + rnd() * 0.7);
        t -= blob(x, y, 268, 200, 9, 36) * 0.07 + blob(x, y, 28, 150, 10, 35) * 0.07 + blob(x, y, 300, 120, 16, 14) * 0.09 + blob(x, y, 332, 172, 8, 12) * 0.1;
        t += blob(x, y, 414, 198, 11, 7) * 0.2 * (0.4 + rnd()) + blob(x, y, 445, 186, 20, 8) * 0.2 * (0.3 + rnd());
        t += blob(x, y, 205, 190, 14, 12) * 0.2 * rnd() + blob(x, y, 278, 176, 12, 10) * 0.2 * rnd() + blob(x, y, 245, 174, 20, 6) * 0.18 * rnd();
        const deep = Math.min(1, Math.max(0, (y - 212) / 26));
        const calm = 0.56 + n(x / 45 + 4, y / 7) * 0.06 + m(x / 18, y / 4) * 0.02 + (x > 330 && y < 250 ? 0.03 : 0) -
            blob(x, y, 45, 239, 22, 5) * 0.1 - blob(x, y, 120, 246, 50, 6) * 0.06 - blob(x, y, 370, 261, 60, 4) * 0.09;
        const spread = (y < 190 ? 0.15 : 0.09) * (1 - deep) + 0.015;
        return color(t * (1 - deep) + calm * deep + fine * spread);
    });
}

// range axes, 5000 m down to 0
document.querySelectorAll('.y-axis').forEach(axis => {
    for (let r = 5000; r >= 0; r -= 500) {
        const li = document.createElement('li');
        li.textContent = r;
        axis.appendChild(li);
    }
});

drawAscope();
drawVelocity();
drawBackscatter();
drawVelocityMap();
```
